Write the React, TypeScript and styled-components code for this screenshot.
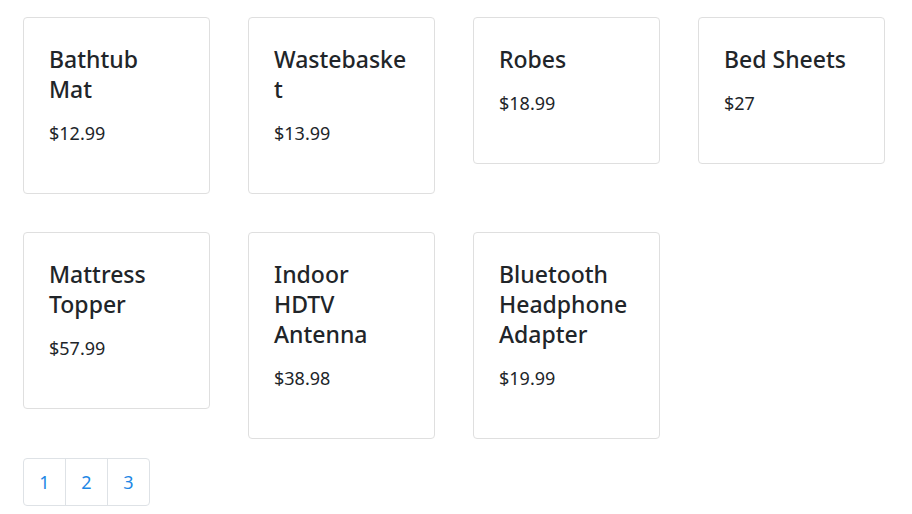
import React from 'react';
import styled, { createGlobalStyle } from 'styled-components';

interface IProduct {
    name: string;
    price: string;
}

const products: IProduct[] = [
    { name: 'Bathtub Mat', price: '$12.99' },
    { name: 'Wastebasket', price: '$13.99' },
    { name: 'Robes', price: '$18.99' },
    { name: 'Bed Sheets', price: '$27' },
    { name: 'Mattress Topper', price: '$57.99' },
    { name: 'Indoor HDTV Antenna', price: '$38.98' },
    { name: 'Bluetooth Headphone Adapter', price: '$19.99' },
];

const pages = [1, 2, 3];

const GlobalStyle = createGlobalStyle`
    body {
        margin: 0;
        background: #fff;
        color: #212529;
        font-family: "Noto Sans", "Open Sans", sans-serif;
    }
`;

const App = () => {
    return (
        <Page>
            <GlobalStyle />
            <Grid>
                {products.map((p) => (
                    <Card key={p.name}>
                        <CardTitle>{p.name}</CardTitle>
                        <Price>{p.price}</Price>
                    </Card>
                ))}
            </Grid>
            <Pagination>
                {pages.map((n) => (
                    <PageItem key={n}>{n}</PageItem>
                ))}
            </Pagination>
        </Page>
    );
};

const Page = styled.div`
    padding: 17px 27px 0 23px;
`;

const Grid = styled.div`
    display: grid;
    grid-template-columns: repeat(4, 187px);
    column-gap: 38px;
    row-gap: 38px;
    align-items: start;
`;

const Card = styled.div`
    box-sizing: border-box;
    border: 1px solid #dfdfdf;
    border-radius: 4px;
    padding: 26px 25px 25px 25px;
`;

const CardTitle = styled.h4`
    margin: 0 0 16px;
    font-size: 23px;
    font-weight: 500;
    line-height: 30px;
    overflow-wrap: anywhere;
`;

const Price = styled.p`
    margin: 0 0 21px;
    font-size: 18px;
    line-height: 27px;
`;

const Pagination = styled.div`
    display: inline-flex;
    margin-top: 19px;
    border: 1px solid #dee2e6;
    border-radius: 4px;
`;

const PageItem = styled.div`
    box-sizing: border-box;
    width: 42px;
    height: 46px;
    display: flex;
    align-items: center;
    justify-content: center;
    font-size: 18px;
    color: #1e87e5;
    &:first-child {
        width: 41px;
    }
    & + & {
        border-left: 1px solid #dee2e6;
    }
`;

export default App;
